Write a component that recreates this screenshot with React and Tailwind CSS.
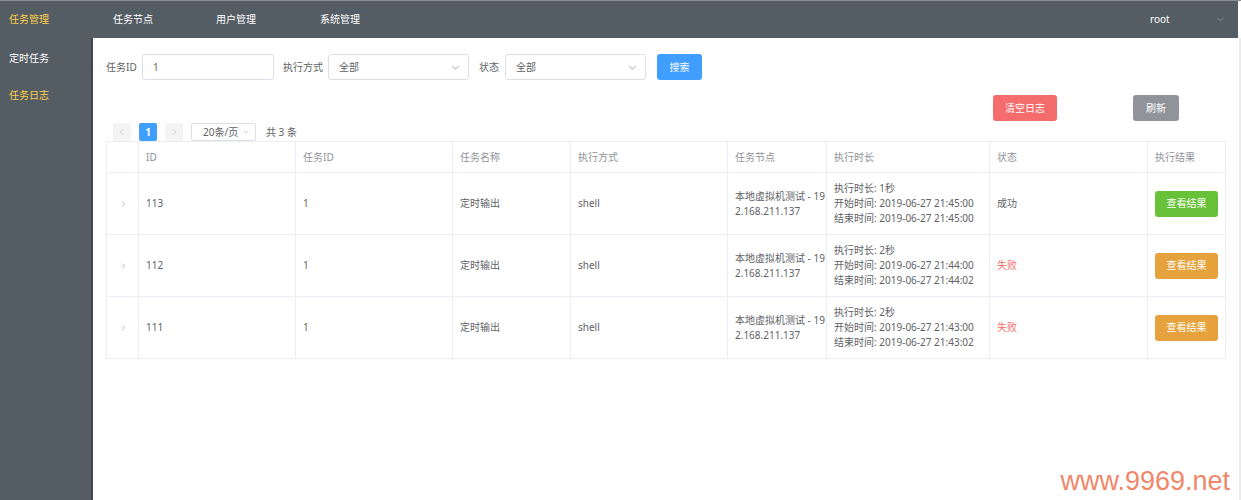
import React from 'react';

const rows = [
	{ id: 113, dur: '1秒', start: '2019-06-27 21:45:00', end: '2019-06-27 21:45:00', ok: true },
	{ id: 112, dur: '2秒', start: '2019-06-27 21:44:00', end: '2019-06-27 21:44:02', ok: false },
	{ id: 111, dur: '2秒', start: '2019-06-27 21:43:00', end: '2019-06-27 21:43:02', ok: false },
];

const Chevron = ({ className = '' }) => (
	<svg viewBox="0 0 10 10" className={className} fill="none" stroke="currentColor" strokeWidth="1">
		<path d="M2 3.5 L5 6.5 L8 3.5" />
	</svg>
);

const Arrow = ({ dir = 'right', className = '' }) => (
	<svg viewBox="0 0 10 10" className={className} fill="none" stroke="currentColor" strokeWidth="1">
		{dir === 'right' ? <path d="M4 2 L7 5 L4 8" /> : <path d="M6 2 L3 5 L6 8" />}
	</svg>
);

const Select = ({ width }) => (
	<div className={`${width} h-[26px] border border-[#dcdfe6] rounded-[3px] flex items-center justify-between pl-[10px] pr-[7px] text-[#606266]`}>
		<span>全部</span>
		<Chevron className="w-[11px] h-[11px] text-[#c0c4cc]" />
	</div>
);

const App = () => {
	const font = { fontFamily: '"Noto Sans", "Noto Sans CJK SC", sans-serif' };
	return (
		<div className="relative w-[1241px] h-[500px] overflow-hidden bg-white text-[10px]" style={font}>
			{/* top nav */}
			<div className="h-[38px] bg-[#545c64] border-t border-[#8a9096] flex items-center text-white">
				<div className="w-[113px] pl-[9px] text-[#ffd04b]">任务管理</div>
				<div className="w-[103px]">任务节点</div>
				<div className="w-[104px]">用户管理</div>
				<div className="w-[100px]">系统管理</div>
				<div className="flex-1" />
				<div className="w-[66px]">root</div>
				<Chevron className="w-[9px] h-[9px] text-[#8a9096] mr-[13px]" />
				<div className="w-[3px] h-full bg-white" />
			</div>

			<div className="flex h-[462px]">
				{/* sidebar */}
				<div className="w-[94px] bg-[#545c64] border-r-2 border-[#40464c] text-white flex flex-col pt-[2px]">
					<div className="h-[37px] pl-[9px] flex items-center">定时任务</div>
					<div className="h-[37px] pl-[9px] flex items-center text-[#ffd04b]">任务日志</div>
				</div>

				{/* main */}
				<div className="flex-1 pl-[13px] pr-[13px] pt-[16px] border-r-2 border-[#ececec]">
					<div className="flex items-center text-[#606266]">
						<span className="w-[36px]">任务ID</span>
						<div className="w-[132px] h-[26px] border border-[#dcdfe6] rounded-[3px] flex items-center pl-[10px]">1</div>
						<span className="ml-[9px] w-[45px]">执行方式</span>
						<Select width="w-[141px]" />
						<span className="ml-[10px] w-[26px]">状态</span>
						<Select width="w-[141px]" />
						<button className="ml-[11px] w-[45px] h-[26px] rounded-[3px] bg-[#409eff] text-white">搜索</button>
					</div>

					<div className="flex justify-end mt-[15px] pr-[47px]">
						<button className="w-[64px] h-[26px] rounded-[3px] bg-[#f56c6c] text-white">清空日志</button>
						<button className="ml-[76px] w-[46px] h-[26px] rounded-[3px] bg-[#909399] text-white">刷新</button>
					</div>

					<div className="flex items-center h-[18px] mt-[2px] pl-[7px] text-[#606266]">
						<div className="w-[18px] h-[18px] bg-[#f4f4f5] rounded-[2px] flex items-center justify-center text-[#c0c4cc]">
							<Arrow dir="left" className="w-[8px] h-[8px]" />
						</div>
						<div className="ml-[8px] w-[18px] h-[18px] bg-[#409eff] rounded-[2px] flex items-center justify-center text-white font-bold">1</div>
						<div className="ml-[8px] w-[18px] h-[18px] bg-[#f4f4f5] rounded-[2px] flex items-center justify-center text-[#c0c4cc]">
							<Arrow className="w-[8px] h-[8px]" />
						</div>
						<div className="ml-[8px] w-[65px] h-[18px] border border-[#dcdfe6] rounded-[2px] flex items-center justify-between pl-[11px] pr-[5px]">
							<span>20条/页</span>
							<Chevron className="w-[8px] h-[8px] text-[#c0c4cc]" />
						</div>
						<span className="ml-[10px]">共 3 条</span>
					</div>

					<table className="w-[1119px] table-fixed border-collapse text-left">
						<colgroup>
							<col className="w-[32px]" />
							<col className="w-[157px]" />
							<col className="w-[157px]" />
							<col className="w-[118px]" />
							<col className="w-[157px]" />
							<col className="w-[99px]" />
							<col className="w-[163px]" />
							<col className="w-[158px]" />
							<col className="w-[78px]" />
						</colgroup>
						<thead>
							<tr className="h-[31px] text-[#909399]">
								<th className="border border-[#ebeef5] font-normal"></th>
								<th className="border border-[#ebeef5] font-normal pl-[7px]">ID</th>
								<th className="border border-[#ebeef5] font-normal pl-[7px]">任务ID</th>
								<th className="border border-[#ebeef5] font-normal pl-[7px]">任务名称</th>
								<th className="border border-[#ebeef5] font-normal pl-[7px]">执行方式</th>
								<th className="border border-[#ebeef5] font-normal pl-[7px]">任务节点</th>
								<th className="border border-[#ebeef5] font-normal pl-[7px]">执行时长</th>
								<th className="border border-[#ebeef5] font-normal pl-[7px]">状态</th>
								<th className="border border-[#ebeef5] font-normal pl-[7px]">执行结果</th>
							</tr>
						</thead>
						<tbody className="text-[#606266]">
							{rows.map((r) => (
								<tr key={r.id} className="h-[62px]">
									<td className="border border-[#ebeef5] text-[#a8abb2]">
										<div className="flex justify-center">
											<Arrow className="w-[8px] h-[8px]" />
										</div>
									</td>
									<td className="border border-[#ebeef5] pl-[7px]">{r.id}</td>
									<td className="border border-[#ebeef5] pl-[7px]">1</td>
									<td className="border border-[#ebeef5] pl-[7px]">定时输出</td>
									<td className="border border-[#ebeef5] pl-[7px]">shell</td>
									<td className="border border-[#ebeef5] pl-[7px] leading-[15px] whitespace-nowrap">
										<div>本地虚拟机测试 - 19</div>
										<div>2.168.211.137</div>
									</td>
									<td className="border border-[#ebeef5] pl-[7px] leading-[15px]">
										<div>执行时长: {r.dur}</div>
										<div>开始时间: {r.start}</div>
										<div>结束时间: {r.end}</div>
									</td>
									<td className={`border border-[#ebeef5] pl-[7px] ${r.ok ? '' : 'text-[#f56c6c]'}`}>
										{r.ok ? '成功' : '失败'}
									</td>
									<td className="border border-[#ebeef5] pl-[7px]">
										<button
											className={`w-[63px] h-[26px] rounded-[3px] text-white ${r.ok ? 'bg-[#67c23a]' : 'bg-[#e6a23c]'}`}
										>
											查看结果
										</button>
									</td>
								</tr>
							))}
						</tbody>
					</table>
				</div>
			</div>

			<div
				className="absolute right-[11px] bottom-[5px] text-[27px] leading-none text-[#f0876a]"
				style={{ fontFamily: '"Liberation Sans", Arial, sans-serif' }}
			>
				www.9969.net
			</div>
		</div>
	);
};

export default App;
